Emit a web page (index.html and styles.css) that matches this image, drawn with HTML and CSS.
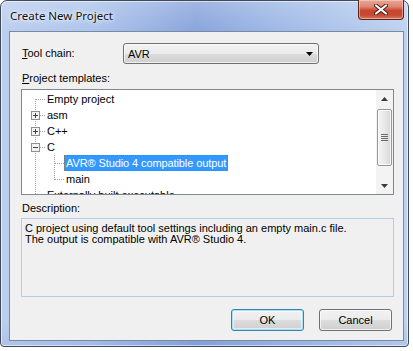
FILE: index.html
```html
<!DOCTYPE html>
<html>
<head>
<meta charset="utf-8">
<link rel="stylesheet" href="styles.css">
</head>
<body>
<div class="window">
  <div class="titlebar">
    <span class="title">Create New Project</span>
    <div class="close">
      <svg width="14" height="11" viewBox="0 0 14 11">
        <path d="M2 1.5 L12 9.5 M12 1.5 L2 9.5" stroke="#4a1a14" stroke-width="4" stroke-linecap="round"/>
        <path d="M2 1.5 L12 9.5 M12 1.5 L2 9.5" stroke="#ffffff" stroke-width="2.2" stroke-linecap="round"/>
      </svg>
    </div>
  </div>
  <div class="client">
    <div class="toolchain">
      <span class="label"><u>T</u>ool chain:</span>
      <div class="combo">
        <span>AVR</span>
        <svg width="7" height="4" viewBox="0 0 7 4"><path d="M0 0 H7 L3.5 4 Z" fill="#000"/></svg>
      </div>
    </div>
    <div class="label section"><u>P</u>roject templates:</div>
    <div class="tree">
      <div class="items">
        <div class="row">
          <svg class="lines l0" width="23" height="16"><path d="M13.5 8 V16 M14 8.5 H23" class="dot"/></svg>
          <span class="text">Empty project</span>
        </div>
        <div class="row">
          <svg class="lines l0" width="23" height="16">
            <path d="M13.5 0 V16 M14 8.5 H23" class="dot"/>
            <rect x="9.5" y="4.5" width="8" height="8" class="box"/>
            <path d="M11 8.5 H16 M13.5 6 V11" class="sign"/>
          </svg>
          <span class="text">asm</span>
        </div>
        <div class="row">
          <svg class="lines l0" width="23" height="16">
            <path d="M13.5 0 V16 M14 8.5 H23" class="dot"/>
            <rect x="9.5" y="4.5" width="8" height="8" class="box"/>
            <path d="M11 8.5 H16 M13.5 6 V11" class="sign"/>
          </svg>
          <span class="text">C++</span>
        </div>
        <div class="row">
          <svg class="lines l0" width="23" height="16">
            <path d="M13.5 0 V16 M14 8.5 H23" class="dot"/>
            <rect x="9.5" y="4.5" width="8" height="8" class="box"/>
            <path d="M11 8.5 H16" class="sign"/>
          </svg>
          <span class="text">C</span>
        </div>
        <div class="row">
          <svg class="lines l1" width="42" height="16"><path d="M13.5 0 V16 M32.5 0 V16 M33 8.5 H42" class="dot"/></svg>
          <span class="text selected">AVR® Studio 4 compatible output</span>
        </div>
        <div class="row">
          <svg class="lines l1" width="42" height="16"><path d="M13.5 0 V16 M32.5 0 V8.5 M33 8.5 H44" class="dot"/></svg>
          <span class="text">main</span>
        </div>
        <div class="row">
          <svg class="lines l0" width="23" height="16"><path d="M13.5 0 V16 M14 8.5 H23" class="dot"/></svg>
          <span class="text">Externally built executable</span>
        </div>
      </div>
      <div class="scrollbar">
        <div class="sb-btn"><svg width="7" height="4" viewBox="0 0 7 4"><path d="M3.5 0 L7 4 H0 Z" fill="#3a3a3a"/></svg></div>
        <div class="sb-track">
          <div class="thumb">
            <svg width="7" height="7" viewBox="0 0 7 7"><path d="M0 0.5 H7 M0 2.5 H7 M0 4.5 H7 M0 6.5 H7" stroke="#6a6a6a" stroke-width="1"/></svg>
          </div>
        </div>
        <div class="sb-btn"><svg width="7" height="4" viewBox="0 0 7 4"><path d="M0 0 H7 L3.5 4 Z" fill="#3a3a3a"/></svg></div>
      </div>
    </div>
    <div class="label desc-label">Description:</div>
    <div class="desc">C project using default tool settings including an empty main.c file.<br>The output is compatible with AVR® Studio 4.</div>
    <div class="buttons">
      <button class="btn default">OK</button>
      <button class="btn">Cancel</button>
    </div>
  </div>
</div>
</body>
</html>
```
FILE: styles.css
```css
html, body {
  margin: 0;
  padding: 0;
  background: #ffffff;
}
body {
  width: 413px;
  height: 351px;
  overflow: hidden;
  font-family: "Liberation Sans", Arial, sans-serif;
  font-size: 11px;
  color: #000;
}
.window {
  box-sizing: border-box;
  width: 409px;
  height: 347px;
  border: 1px solid #404a58;
  border-radius: 7px 7px 4px 4px;
  background:
    linear-gradient(180deg, rgba(255,255,255,0.2) 0px, rgba(255,255,255,0) 30px, rgba(255,255,255,0) 320px, rgba(70,110,200,0.12) 100%),
    linear-gradient(90deg, #bccfee 0%, #aec5ec 22%, #89a5dc 48%, #9fb9e6 68%, #bfd2f0 100%);
  box-shadow: inset 0 0 0 1px rgba(255,255,255,0.55);
  display: flex;
  flex-direction: column;
}
.titlebar {
  height: 30px;
  display: flex;
  align-items: center;
  padding-left: 9px;
  padding-right: 4px;
  flex: none;
}
.title {
  font-family: "Noto Sans", sans-serif;
  font-size: 11.5px;
  color: #111;
  text-shadow: 0 0 6px #fff, 0 0 3px #fff;
  flex: 1;
  padding-bottom: 1px;
}
.close {
  align-self: flex-start;
  margin-top: -1px;
  width: 46px;
  height: 20px;
  box-sizing: border-box;
  border: 1px solid #5e241b;
  border-top: none;
  border-radius: 0 0 4px 4px;
  background: linear-gradient(180deg, #e9a797 0%, #dc8773 35%, #c9452f 55%, #c24a34 80%, #d77a62 100%);
  box-shadow: inset 0 0 0 1px rgba(255,220,210,0.5);
  display: flex;
  align-items: center;
  justify-content: center;
}
.client {
  box-sizing: border-box;
  margin: 0 4px 5px 8px;
  flex: 1;
  background: #f0f0f0;
  border: 1px solid #7b8aa0;
  padding: 0 9px 0 11px;
  display: flex;
  flex-direction: column;
}
.label {
  line-height: 13px;
  padding-left: 1px;
}
.toolchain {
  margin-top: 11px;
  display: flex;
  align-items: center;
}
.toolchain .label {
  width: 101px;
}
.combo {
  box-sizing: border-box;
  width: 196px;
  height: 21px;
  border: 1px solid #707070;
  border-radius: 3px;
  background: linear-gradient(180deg, #f2f2f2 0%, #ebebeb 50%, #dddddd 51%, #cfcfcf 100%);
  box-shadow: inset 0 0 0 1px rgba(255,255,255,0.7);
  display: flex;
  align-items: center;
  justify-content: space-between;
  padding: 0 5px 0 4px;
}
.section {
  margin-top: 8px;
}
.tree {
  margin-top: 4px;
  box-sizing: border-box;
  height: 106px;
  border: 1px solid #828790;
  background: #fff;
  display: flex;
  overflow: hidden;
}
.items {
  flex: 1;
  padding-top: 1px;
  overflow: hidden;
}
.row {
  height: 16px;
  display: flex;
  align-items: center;
  white-space: nowrap;
}
.lines {
  flex: none;
  display: block;
}
.dot {
  stroke: #a0a0a0;
  stroke-width: 1;
  stroke-dasharray: 1 1;
  fill: none;
  shape-rendering: crispEdges;
}
.box {
  fill: #f4f4f4;
  stroke: #8f8f8f;
  stroke-width: 1;
  shape-rendering: crispEdges;
}
.sign {
  stroke: #2d3f73;
  stroke-width: 1;
  shape-rendering: crispEdges;
}
.text {
  box-sizing: border-box;
  height: 16px;
  line-height: 14px;
  padding: 1px 2px;
}
.text.selected {
  background: #3399ff;
  color: #fff;
  border: 1px dotted #b86a18;
  padding: 0 1px;
  letter-spacing: -0.1px;
}
.scrollbar {
  width: 17px;
  flex: none;
  background: #f3f3f3;
  display: flex;
  flex-direction: column;
}
.sb-btn {
  height: 17px;
  flex: none;
  display: flex;
  align-items: center;
  justify-content: center;
}
.sb-track {
  flex: 1;
  display: flex;
  flex-direction: column;
  padding: 2px 1px 0 1px;
}
.thumb {
  box-sizing: border-box;
  height: 57px;
  border: 1px solid #979797;
  border-radius: 2px;
  background: linear-gradient(90deg, #f4f4f4 0%, #e8e8e8 50%, #d6d6d6 100%);
  box-shadow: inset 0 0 0 1px rgba(255,255,255,0.8);
  display: flex;
  align-items: center;
  justify-content: center;
}
.desc-label {
  margin-top: 7px;
}
.desc {
  margin-top: 3px;
  box-sizing: border-box;
  height: 79px;
  border: 1px solid #b3cbe6;
  background: #f0f0f0;
  padding: 4px 3px;
  line-height: 11px;
}
.buttons {
  margin-top: 12px;
  display: flex;
  justify-content: flex-end;
  gap: 15px;
  padding-right: 2px;
}
.btn {
  box-sizing: border-box;
  width: 73px;
  height: 22px;
  border: 1px solid #707070;
  border-radius: 3px;
  background: linear-gradient(180deg, #f2f2f2 0%, #ebebeb 50%, #dddddd 51%, #cfcfcf 100%);
  box-shadow: inset 0 0 0 1px rgba(255,255,255,0.7);
  font-family: "Liberation Sans", Arial, sans-serif;
  font-size: 11px;
  color: #000;
  padding: 0;
}
.btn.default {
  border-color: #3c7fb1;
  box-shadow: inset 0 0 0 1px #a7e3f8, inset 0 0 0 2px rgba(255,255,255,0.5);
}
```
